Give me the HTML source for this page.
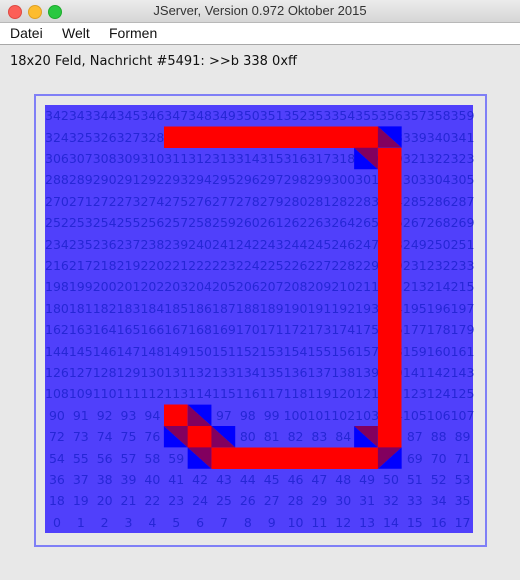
<!DOCTYPE html>
<html><head><meta charset="utf-8"><style>
body{margin:0;width:520px;height:580px;background:#e8e8e8;font-family:"Liberation Sans",sans-serif;position:relative;overflow:hidden}
.tb{position:absolute;left:0;top:0;width:520px;height:22px;background:linear-gradient(#ececec,#d6d6d6);border-bottom:1px solid #b8b8b8;text-align:center;font-size:13px;line-height:22px;color:#333}
.dot{position:absolute;top:5px;width:12px;height:12px;border-radius:50%}
.mb{position:absolute;left:0;top:23px;width:520px;height:21px;background:#fff;border-bottom:1px solid #a8a8a8;font-size:14px;line-height:21px;color:#111}
.mb span{position:absolute;top:0}
.st{position:absolute;left:10px;top:54px;font-size:14px;color:#111;font-family:"DejaVu Sans",sans-serif;font-size:13px}
.fr{position:absolute;left:34px;top:94px;width:449px;height:449px;border:2px solid #7f7ff6}
.g{position:absolute;left:45px;top:105px;width:428px;height:428px;background:#5040fb;display:grid;grid-template-columns:repeat(18,1fr);grid-template-rows:repeat(20,1fr);font-family:"DejaVu Sans",sans-serif;font-size:12.5px;color:#2626d6}
.g div{display:flex;justify-content:center;align-items:center;white-space:nowrap}
svg{position:absolute;left:45px;top:105px}
</style></head><body>
<div class="tb">JServer, Version 0.972 Oktober 2015</div>
<div class="dot" style="left:8px;background:#fc5f57;border:0.5px solid #de4a42"></div>
<div class="dot" style="left:28px;background:#fdbc2e;border:0.5px solid #dea024"></div>
<div class="dot" style="left:48px;background:#29c840;border:0.5px solid #1daa2c"></div>
<div class="mb"><span style="left:10px">Datei</span><span style="left:62px">Welt</span><span style="left:109px">Formen</span></div>
<div class="st">18x20 Feld, Nachricht #5491: &gt;&gt;b 338 0xff</div>
<div class="fr"></div>
<div class="g">
<div>342</div><div>343</div><div>344</div><div>345</div><div>346</div><div>347</div><div>348</div><div>349</div><div>350</div><div>351</div><div>352</div><div>353</div><div>354</div><div>355</div><div>356</div><div>357</div><div>358</div><div>359</div>
<div>324</div><div>325</div><div>326</div><div>327</div><div>328</div><div>329</div><div>330</div><div>331</div><div>332</div><div>333</div><div>334</div><div>335</div><div>336</div><div>337</div><div>338</div><div>339</div><div>340</div><div>341</div>
<div>306</div><div>307</div><div>308</div><div>309</div><div>310</div><div>311</div><div>312</div><div>313</div><div>314</div><div>315</div><div>316</div><div>317</div><div>318</div><div>319</div><div>320</div><div>321</div><div>322</div><div>323</div>
<div>288</div><div>289</div><div>290</div><div>291</div><div>292</div><div>293</div><div>294</div><div>295</div><div>296</div><div>297</div><div>298</div><div>299</div><div>300</div><div>301</div><div>302</div><div>303</div><div>304</div><div>305</div>
<div>270</div><div>271</div><div>272</div><div>273</div><div>274</div><div>275</div><div>276</div><div>277</div><div>278</div><div>279</div><div>280</div><div>281</div><div>282</div><div>283</div><div>284</div><div>285</div><div>286</div><div>287</div>
<div>252</div><div>253</div><div>254</div><div>255</div><div>256</div><div>257</div><div>258</div><div>259</div><div>260</div><div>261</div><div>262</div><div>263</div><div>264</div><div>265</div><div>266</div><div>267</div><div>268</div><div>269</div>
<div>234</div><div>235</div><div>236</div><div>237</div><div>238</div><div>239</div><div>240</div><div>241</div><div>242</div><div>243</div><div>244</div><div>245</div><div>246</div><div>247</div><div>248</div><div>249</div><div>250</div><div>251</div>
<div>216</div><div>217</div><div>218</div><div>219</div><div>220</div><div>221</div><div>222</div><div>223</div><div>224</div><div>225</div><div>226</div><div>227</div><div>228</div><div>229</div><div>230</div><div>231</div><div>232</div><div>233</div>
<div>198</div><div>199</div><div>200</div><div>201</div><div>202</div><div>203</div><div>204</div><div>205</div><div>206</div><div>207</div><div>208</div><div>209</div><div>210</div><div>211</div><div>212</div><div>213</div><div>214</div><div>215</div>
<div>180</div><div>181</div><div>182</div><div>183</div><div>184</div><div>185</div><div>186</div><div>187</div><div>188</div><div>189</div><div>190</div><div>191</div><div>192</div><div>193</div><div>194</div><div>195</div><div>196</div><div>197</div>
<div>162</div><div>163</div><div>164</div><div>165</div><div>166</div><div>167</div><div>168</div><div>169</div><div>170</div><div>171</div><div>172</div><div>173</div><div>174</div><div>175</div><div>176</div><div>177</div><div>178</div><div>179</div>
<div>144</div><div>145</div><div>146</div><div>147</div><div>148</div><div>149</div><div>150</div><div>151</div><div>152</div><div>153</div><div>154</div><div>155</div><div>156</div><div>157</div><div>158</div><div>159</div><div>160</div><div>161</div>
<div>126</div><div>127</div><div>128</div><div>129</div><div>130</div><div>131</div><div>132</div><div>133</div><div>134</div><div>135</div><div>136</div><div>137</div><div>138</div><div>139</div><div>140</div><div>141</div><div>142</div><div>143</div>
<div>108</div><div>109</div><div>110</div><div>111</div><div>112</div><div>113</div><div>114</div><div>115</div><div>116</div><div>117</div><div>118</div><div>119</div><div>120</div><div>121</div><div>122</div><div>123</div><div>124</div><div>125</div>
<div>90</div><div>91</div><div>92</div><div>93</div><div>94</div><div>95</div><div>96</div><div>97</div><div>98</div><div>99</div><div>100</div><div>101</div><div>102</div><div>103</div><div>104</div><div>105</div><div>106</div><div>107</div>
<div>72</div><div>73</div><div>74</div><div>75</div><div>76</div><div>77</div><div>78</div><div>79</div><div>80</div><div>81</div><div>82</div><div>83</div><div>84</div><div>85</div><div>86</div><div>87</div><div>88</div><div>89</div>
<div>54</div><div>55</div><div>56</div><div>57</div><div>58</div><div>59</div><div>60</div><div>61</div><div>62</div><div>63</div><div>64</div><div>65</div><div>66</div><div>67</div><div>68</div><div>69</div><div>70</div><div>71</div>
<div>36</div><div>37</div><div>38</div><div>39</div><div>40</div><div>41</div><div>42</div><div>43</div><div>44</div><div>45</div><div>46</div><div>47</div><div>48</div><div>49</div><div>50</div><div>51</div><div>52</div><div>53</div>
<div>18</div><div>19</div><div>20</div><div>21</div><div>22</div><div>23</div><div>24</div><div>25</div><div>26</div><div>27</div><div>28</div><div>29</div><div>30</div><div>31</div><div>32</div><div>33</div><div>34</div><div>35</div>
<div>0</div><div>1</div><div>2</div><div>3</div><div>4</div><div>5</div><div>6</div><div>7</div><div>8</div><div>9</div><div>10</div><div>11</div><div>12</div><div>13</div><div>14</div><div>15</div><div>16</div><div>17</div>
</div>
<svg width="428" height="428" viewBox="0 0 18 20" preserveAspectRatio="none" shape-rendering="crispEdges">
<g fill="#ff0000">
<rect x="5" y="1" width="9" height="1"/>
<rect x="14" y="2" width="1" height="14"/>
<rect x="5" y="14" width="1" height="1"/>
<rect x="6" y="15" width="1" height="1"/>
<rect x="7" y="16" width="7" height="1"/>
</g>
<g shape-rendering="auto">
<!-- blue upper-right, purple lower-left -->
<polygon points="14,1 15,1 15,2" fill="#0000ff"/><polygon points="14,1 14,2 15,2" fill="#82005f"/>
<polygon points="6,14 7,14 7,15" fill="#0000ff"/><polygon points="6,14 6,15 7,15" fill="#82005f"/>
<polygon points="7,15 8,15 8,16" fill="#0000ff"/><polygon points="7,15 7,16 8,16" fill="#82005f"/>
<!-- blue lower-left, purple upper-right -->
<polygon points="13,2 13,3 14,3" fill="#0000ff"/><polygon points="13,2 14,2 14,3" fill="#82005f"/>
<polygon points="5,15 5,16 6,16" fill="#0000ff"/><polygon points="5,15 6,15 6,16" fill="#82005f"/>
<polygon points="13,15 13,16 14,16" fill="#0000ff"/><polygon points="13,15 14,15 14,16" fill="#82005f"/>
<polygon points="6,16 6,17 7,17" fill="#0000ff"/><polygon points="6,16 7,16 7,17" fill="#82005f"/>
<!-- purple upper-left, blue lower-right -->
<polygon points="14,16 15,16 14,17" fill="#82005f"/><polygon points="15,16 15,17 14,17" fill="#0000ff"/>
</g>
</svg>
</body></html>
